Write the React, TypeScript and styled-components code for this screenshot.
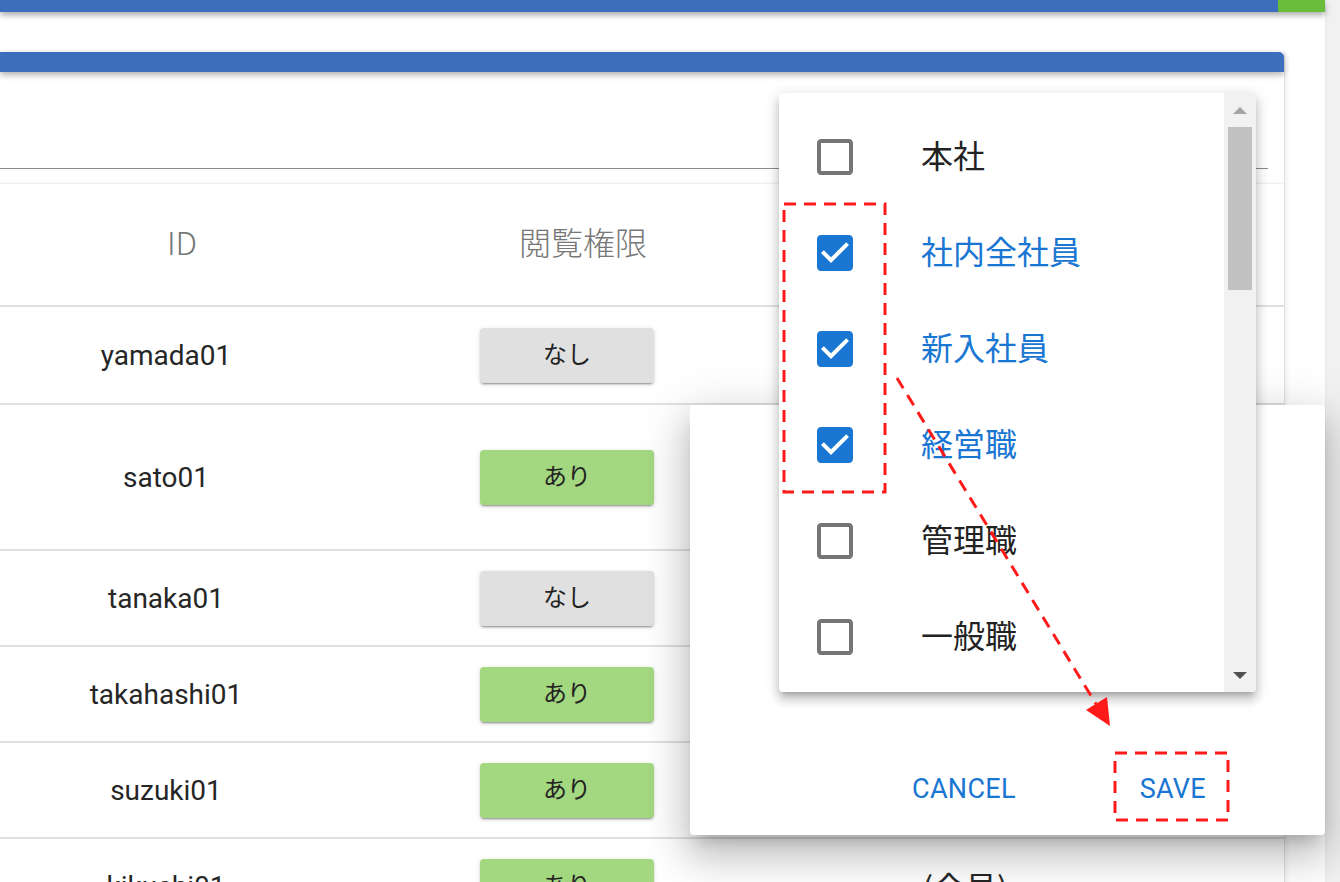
import React from "react";
import styled, { createGlobalStyle } from "styled-components";

const GlobalStyle = createGlobalStyle`
  html, body {
    margin: 0;
    padding: 0;
    background: #ffffff;
    overflow: hidden;
  }
  body {
    font-family: Roboto, "Noto Sans CJK JP", sans-serif;
    color: #212121;
  }
  * {
    box-sizing: border-box;
  }
`;

const Page = styled.div`
  position: relative;
  display: flex;
  width: 1340px;
  height: 882px;
  overflow: hidden;
`;

const Main = styled.div`
  width: 1325px;
  display: flex;
  flex-direction: column;
`;

const PageScrollTrack = styled.div`
  width: 15px;
  flex-shrink: 0;
  background: #f1f1f1;
  border-left: 1px solid #e9e9e9;
`;

const TopBar = styled.div`
  position: relative;
  z-index: 2;
  flex-shrink: 0;
  display: flex;
  height: 12px;
  box-shadow: 0 3px 6px rgba(0, 0, 0, 0.35);
`;

const TopBarMain = styled.div`
  flex: 1;
  background: #3b6fbe;
`;

const TopBarAccent = styled.div`
  width: 47px;
  background: #69bd3b;
`;

const Content = styled.div`
  flex-shrink: 0;
  padding-top: 40px;
`;

const Card = styled.div`
  width: 1285px;
  background: #ffffff;
  border-right: 1px solid #e2e2e2;
  box-shadow: 2px 0 4px rgba(0, 0, 0, 0.06);
`;

const CardHead = styled.div`
  position: relative;
  height: 20px;
  background: #3b6fbe;
  border-top-right-radius: 5px;
  box-shadow: 0 3px 6px rgba(0, 0, 0, 0.3);
`;

const SearchArea = styled.div`
  height: 111px;
  padding-right: 16px;
  display: flex;
  align-items: flex-end;
`;

const SearchLine = styled.div`
  flex: 1;
  height: 1px;
  margin-bottom: 14px;
  background: #8c8c8c;
`;

const Table = styled.div`
  border-top: 1px solid #f0f0f0;
  box-shadow: 0 -1px 2px rgba(0, 0, 0, 0.03);
`;

const Row = styled.div<{ $h: number }>`
  display: grid;
  grid-template-columns: 332px 470px 326px 1fr;
  align-items: center;
  height: ${p => p.$h}px;
  border-bottom: 2px solid #e0e0e0;
`;

const HeadCell = styled.div`
  text-align: center;
  padding-left: 32px;
  padding-bottom: 8px;
  font-size: 32px;
  color: #777777;
  font-family: "Noto Sans CJK JP", Roboto, sans-serif;
  font-weight: 300;
`;

const IdCell = styled.div`
  text-align: center;
  font-size: 28px;
  color: #262626;
`;

const ChipCell = styled.div`
  display: flex;
  justify-content: center;
`;

const Chip = styled.div<{ $on: boolean }>`
  width: 174px;
  height: 55px;
  padding-bottom: 5px;
  border-radius: 4px;
  display: flex;
  align-items: center;
  justify-content: center;
  background: ${p => (p.$on ? "#a3d881" : "#e0e0e0")};
  box-shadow: 0 3px 1px -2px rgba(0, 0, 0, 0.2), 0 2px 2px 0 rgba(0, 0, 0, 0.14),
    0 1px 5px 0 rgba(0, 0, 0, 0.12);
  font-family: "Noto Sans CJK JP", sans-serif;
  font-size: 24px;
  color: #222222;
`;

const GroupCell = styled.div`
  text-align: center;
  font-family: "Noto Sans CJK JP", sans-serif;
  font-size: 32px;
  color: #262626;
`;

const Dialog = styled.div`
  position: absolute;
  left: 690px;
  top: 405px;
  width: 635px;
  height: 430px;
  background: #ffffff;
  border-radius: 4px;
  display: flex;
  flex-direction: column;
  justify-content: flex-end;
  box-shadow: 0 11px 15px -7px rgba(0, 0, 0, 0.2),
    0 24px 38px 3px rgba(0, 0, 0, 0.14), 0 9px 46px 8px rgba(0, 0, 0, 0.12);
  z-index: 5;
`;

const DialogActions = styled.div`
  height: 92px;
  display: flex;
  align-items: center;
  justify-content: flex-end;
  gap: 92px;
  padding-right: 103px;
`;

const TextButton = styled.button`
  border: none;
  background: none;
  padding: 8px 16px;
  font-family: Roboto, sans-serif;
  font-size: 27px;
  letter-spacing: 0.3px;
  color: #1976d2;
  cursor: pointer;
`;

const Menu = styled.div`
  position: absolute;
  left: 779px;
  top: 93px;
  width: 477px;
  height: 599px;
  display: flex;
  background: #ffffff;
  border-radius: 4px;
  overflow: hidden;
  box-shadow: 0 5px 5px -3px rgba(0, 0, 0, 0.2), 0 8px 10px 1px rgba(0, 0, 0, 0.14),
    0 3px 14px 2px rgba(0, 0, 0, 0.12);
  z-index: 6;
`;

const MenuList = styled.div`
  flex: 1;
  padding-top: 16px;
  overflow: hidden;
`;

const MenuItem = styled.div<{ $checked: boolean }>`
  height: 96px;
  display: flex;
  align-items: center;
  padding-left: 32px;
  font-family: "Noto Sans CJK JP", sans-serif;
  font-size: 32px;
  color: ${p => (p.$checked ? "#1976d2" : "#222222")};
`;

const MenuLabel = styled.span`
  line-height: 1;
  padding-bottom: 6px;
`;

const CheckIcon = styled.svg<{ $checked: boolean }>`
  width: 48px;
  height: 48px;
  flex-shrink: 0;
  margin-right: 62px;
  fill: ${p => (p.$checked ? "#1976d2" : "#757575")};
`;

const ScrollBar = styled.div`
  width: 32px;
  background: #f1f1f1;
  display: flex;
  flex-direction: column;
`;

const ScrollArrow = styled.div<{ $dir: "up" | "down" }>`
  height: 34px;
  display: flex;
  align-items: center;
  justify-content: center;
  &::after {
    content: "";
    width: 0;
    height: 0;
    border-left: 7px solid transparent;
    border-right: 7px solid transparent;
    ${p =>
      p.$dir === "up"
        ? "border-bottom: 7px solid #a3a3a3;"
        : "border-top: 7px solid #505050;"}
  }
`;

const ScrollTrack = styled.div`
  flex: 1;
  padding: 0 4px;
`;

const ScrollThumb = styled.div`
  height: 163px;
  background: #c1c1c1;
`;

const Annotation = styled.svg`
  position: absolute;
  left: 0;
  top: 0;
  width: 1340px;
  height: 882px;
  pointer-events: none;
  z-index: 10;
`;

const CHECKED_PATH =
  "M19 3H5c-1.11 0-2 .9-2 2v14c0 1.1.89 2 2 2h14c1.1 0 2-.9 2-2V5c0-1.1-.9-2-2-2zm-9 14l-5-5 1.41-1.41L10 14.17l7.59-7.59L19 8l-9 9z";
const BLANK_PATH =
  "M19 5v14H5V5h14m0-2H5c-1.11 0-2 .9-2 2v14c0 1.1.89 2 2 2h14c1.1 0 2-.9 2-2V5c0-1.1-.9-2-2-2z";

// group column is hidden by the popup for most rows
const users = [
  { id: "yamada01", view: false, h: 98, group: "" },
  { id: "sato01", view: true, h: 146, group: "" },
  { id: "tanaka01", view: false, h: 96, group: "" },
  { id: "takahashi01", view: true, h: 96, group: "" },
  { id: "suzuki01", view: true, h: 96, group: "" },
  { id: "kikuchi01", view: true, h: 96, group: "(会員)" },
];

const groups = [
  { name: "本社", checked: false },
  { name: "社内全社員", checked: true },
  { name: "新入社員", checked: true },
  { name: "経営職", checked: true },
  { name: "管理職", checked: false },
  { name: "一般職", checked: false },
  { name: "契約社員", checked: false },
];

const App = () => {
  return (
    <>
      <GlobalStyle />
      <Page>
        <Main>
          <TopBar>
            <TopBarMain />
            <TopBarAccent />
          </TopBar>
          <Content>
            <Card>
              <CardHead />
              <SearchArea>
                <SearchLine />
              </SearchArea>
              <Table>
                <Row $h={123}>
                  <HeadCell>ID</HeadCell>
                  <HeadCell>閲覧権限</HeadCell>
                  <HeadCell />
                  <HeadCell />
                </Row>
                {users.map(user => (
                  <Row key={user.id} $h={user.h}>
                    <IdCell>{user.id}</IdCell>
                    <ChipCell>
                      <Chip $on={user.view}>{user.view ? "あり" : "なし"}</Chip>
                    </ChipCell>
                    <GroupCell>{user.group}</GroupCell>
                    <div />
                  </Row>
                ))}
              </Table>
            </Card>
          </Content>
        </Main>
        <PageScrollTrack />

        <Dialog>
          <DialogActions>
            <TextButton type="button">CANCEL</TextButton>
            <TextButton type="button">SAVE</TextButton>
          </DialogActions>
        </Dialog>

        <Menu>
          <MenuList>
            {groups.map(group => (
              <MenuItem key={group.name} $checked={group.checked}>
                <CheckIcon viewBox="0 0 24 24" $checked={group.checked}>
                  <path d={group.checked ? CHECKED_PATH : BLANK_PATH} />
                </CheckIcon>
                <MenuLabel>{group.name}</MenuLabel>
              </MenuItem>
            ))}
          </MenuList>
          <ScrollBar>
            <ScrollArrow $dir="up" />
            <ScrollTrack>
              <ScrollThumb />
            </ScrollTrack>
            <ScrollArrow $dir="down" />
          </ScrollBar>
        </Menu>

        <Annotation viewBox="0 0 1340 882">
          <g fill="none" stroke="#ff1a1a" strokeWidth="3" strokeDasharray="12 8">
            <rect x="784" y="204" width="101" height="288" />
            <rect x="1115" y="753" width="113" height="67" />
            <line x1="897" y1="378" x2="1096" y2="704" />
          </g>
          <polygon points="1110,726 1086,710 1107,697" fill="#ff1a1a" />
        </Annotation>
      </Page>
    </>
  );
};

export default App;
